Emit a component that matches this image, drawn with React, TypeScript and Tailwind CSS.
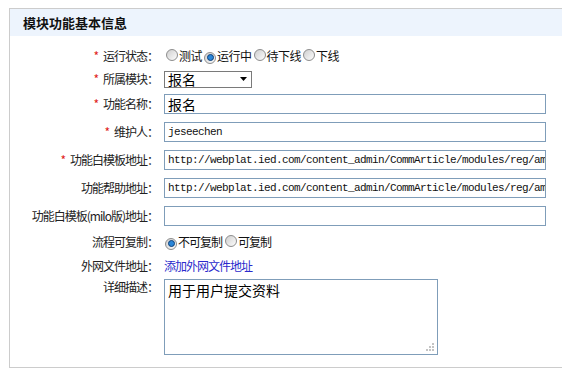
import React from "react";

function Radio({ checked }: { checked?: boolean }) {
  return (
    <span className="inline-flex w-[12px] h-[12px] rounded-full border border-[#8d8d8d] bg-linear-to-br from-[#cfcfcf] to-[#fdfdfd] items-center justify-center shrink-0">
      {checked && (
        <span className="w-[7px] h-[7px] rounded-full bg-[#2a86d8] border border-[#0c3f78]" />
      )}
    </span>
  );
}

function Label({ req, children, top }: { req?: boolean; children: React.ReactNode; top?: boolean }) {
  return (
    <div className={`w-[148px] shrink-0 text-right text-[12px] tracking-[-1px] leading-[16px] text-[#222] ${top ? "self-start pt-[1px]" : ""}`}>
      {req && <span className="text-[#e02020] mr-[5px]">*</span>}
      {children}
    </div>
  );
}

function Row({ h, children, top }: { h: string; children: React.ReactNode; top?: boolean }) {
  return <div className={`flex ${top ? "items-start" : "items-center"} ${h}`}>{children}</div>;
}

function TextInput({ value, mono }: { value: string; mono?: boolean }) {
  return (
    <div className="ml-[6px] w-[382px] h-[20px] border border-[#7f9db9] bg-white flex items-center px-[3px] overflow-hidden whitespace-nowrap">
      {mono ? (
        <span className="font-['Liberation_Mono',monospace] text-[11px] tracking-[-0.6px] text-[#111] leading-[14px]">{value}</span>
      ) : (
        <span className="text-[14px] leading-[18px] text-black">{value}</span>
      )}
    </div>
  );
}

export default function App() {
  const url = "http://webplat.ied.com/content_admin/CommArticle/modules/reg/am";
  return (
    <div className="w-[562px] h-[369px] bg-white overflow-hidden pt-[8px] pl-[9px] font-['Noto_Sans_CJK_SC',sans-serif]">
      <div className="w-[560px] h-[360px] border-l border-t border-b border-[#cccccc]">
        <div className="h-[27px] bg-[#edf4fd] flex items-center pl-[13px]">
          <span className="text-[13px] font-bold text-[#111] leading-[16px]">模块功能基本信息</span>
        </div>
        <div className="pt-[8px]">
          <Row h="h-[24px]">
            <Label req>运行状态：</Label>
            <div className="ml-[6px] flex items-center text-[12px] tracking-[-0.5px] leading-[16px] text-[#111]">
              <span className="ml-[2px]"><Radio /></span>
              <span className="ml-[1px]">测试</span>
              <span className="ml-[2px]"><Radio checked /></span>
              <span className="ml-[1px]">运行中</span>
              <span className="ml-[2px]"><Radio /></span>
              <span className="ml-[1px]">待下线</span>
              <span className="ml-[2px]"><Radio /></span>
              <span className="ml-[1px]">下线</span>
            </div>
          </Row>
          <Row h="h-[22px]">
            <Label req>所属模块：</Label>
            <div className="ml-[6px] w-[88px] h-[17px] border border-[#7a7a7a] bg-white flex items-center justify-between pl-[3px] pr-[4px]">
              <span className="text-[14px] leading-[16px] text-black">报名</span>
              <svg width="7" height="4" viewBox="0 0 7 4">
                <path d="M0 0 H7 L3.5 4 Z" fill="#000" />
              </svg>
            </div>
          </Row>
          <Row h="h-[28px]">
            <Label req>功能名称：</Label>
            <TextInput value="报名" />
          </Row>
          <Row h="h-[28px]">
            <Label req>维护人：</Label>
            <TextInput value="jeseechen" mono />
          </Row>
          <Row h="h-[28px]">
            <Label req>功能白模板地址：</Label>
            <TextInput value={url} mono />
          </Row>
          <Row h="h-[28px]">
            <Label>功能帮助地址：</Label>
            <TextInput value={url} mono />
          </Row>
          <Row h="h-[28px]">
            <Label>功能白模板(milo版)地址：</Label>
            <TextInput value="" />
          </Row>
          <Row h="h-[24px]">
            <Label>流程可复制：</Label>
            <div className="ml-[6px] flex items-center text-[12px] tracking-[-1px] leading-[16px] text-[#111]">
              <span className="ml-[1px]"><Radio checked /></span>
              <span className="ml-[1px]">不可复制</span>
              <span className="ml-[3px]"><Radio /></span>
              <span className="ml-[1px]">可复制</span>
            </div>
          </Row>
          <Row h="h-[24px]">
            <Label>外网文件地址：</Label>
            <a className="ml-[6px] text-[12px] tracking-[-1px] leading-[16px] text-[#2a2acc] cursor-pointer">添加外网文件地址</a>
          </Row>
          <Row h="h-[77px]" top>
            <Label top>详细描述：</Label>
            <div className="ml-[6px] mt-[1px] w-[274px] h-[76px] border border-[#7f9db9] bg-white relative px-[3px] pt-[1px] text-[14px] leading-[18px] text-black">
              用于用户提交资料
              <svg className="absolute right-[3px] bottom-[3px]" width="9" height="9" viewBox="0 0 9 9">
                <rect x="7" y="1" width="2" height="2" fill="#c4c4c4" />
                <rect x="4" y="4" width="2" height="2" fill="#c4c4c4" />
                <rect x="7" y="4" width="2" height="2" fill="#c4c4c4" />
                <rect x="1" y="7" width="2" height="2" fill="#c4c4c4" />
                <rect x="4" y="7" width="2" height="2" fill="#c4c4c4" />
                <rect x="7" y="7" width="2" height="2" fill="#c4c4c4" />
              </svg>
            </div>
          </Row>
        </div>
      </div>
    </div>
  );
}
